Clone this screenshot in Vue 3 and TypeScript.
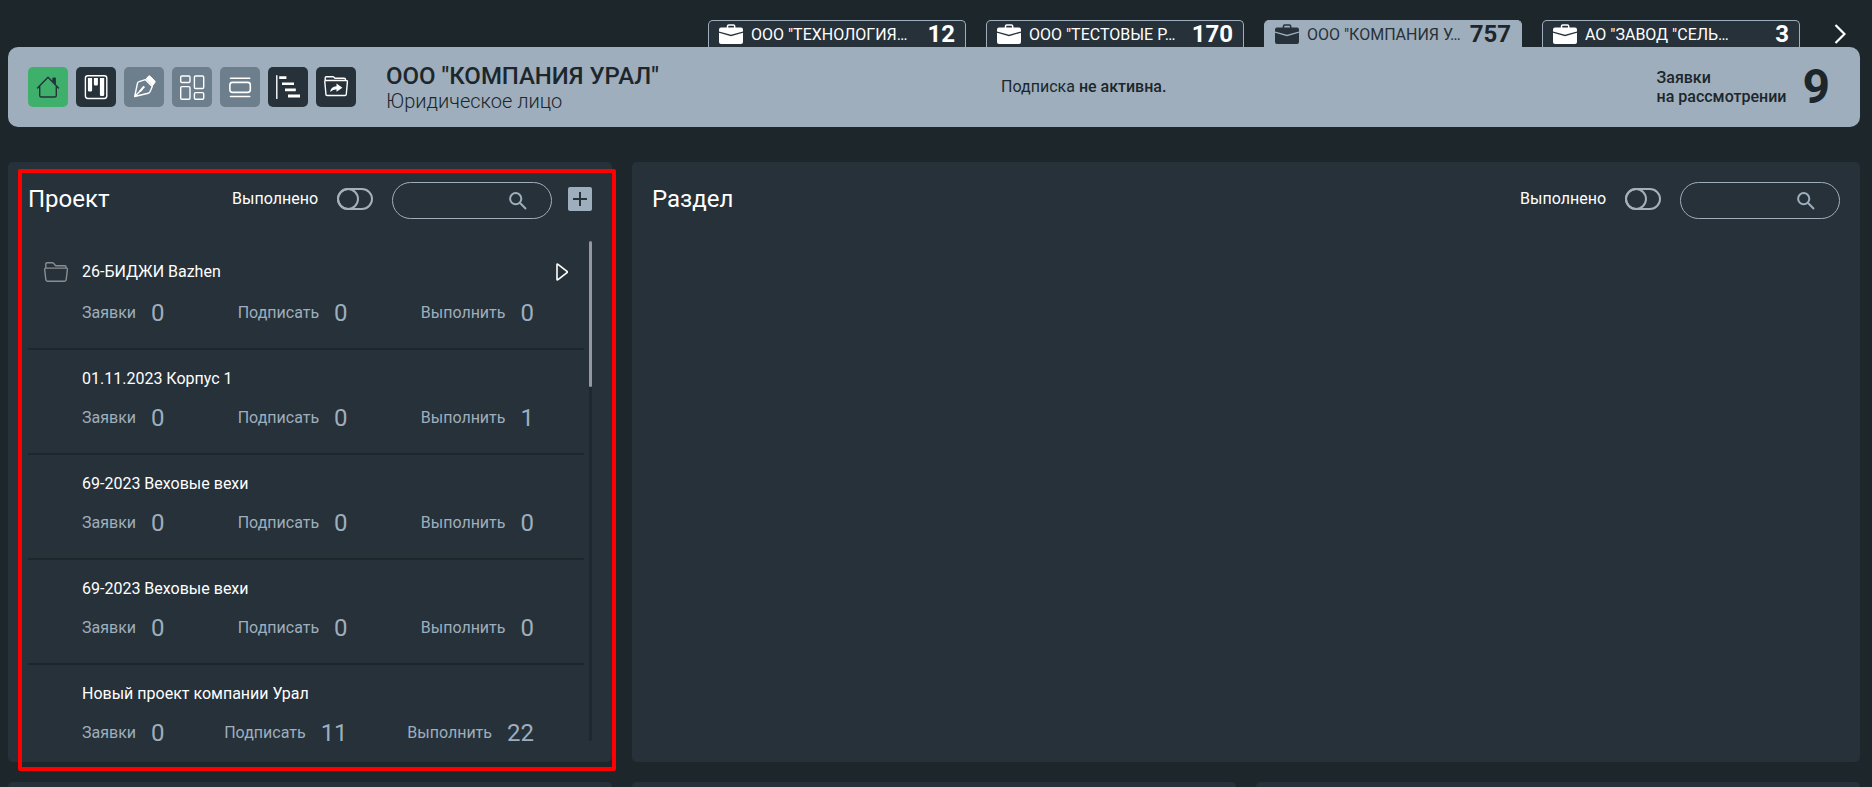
<script setup lang="ts">
import { ref } from 'vue'

interface CompanyTab { name: string; count: number; active?: boolean }
interface Tool { id: string; label: string; tone: 'home' | 'dark' | 'muted' }
interface Project { name: string; folder?: boolean; requests: number; sign: number; todo: number }

const tabs: CompanyTab[] = [
  { name: 'ООО "ТЕХНОЛОГИЯ…', count: 12 },
  { name: 'ООО "ТЕСТОВЫЕ Р…', count: 170 },
  { name: 'ООО "КОМПАНИЯ У…', count: 757, active: true },
  { name: 'АО "ЗАВОД "СЕЛЬ…', count: 3 },
]

const tools: Tool[] = [
  { id: 'home', label: 'Главная', tone: 'home' },
  { id: 'board', label: 'Доска', tone: 'dark' },
  { id: 'pen', label: 'Подпись', tone: 'muted' },
  { id: 'grid', label: 'Плитка', tone: 'muted' },
  { id: 'slides', label: 'Лента', tone: 'muted' },
  { id: 'gantt', label: 'График', tone: 'dark' },
  { id: 'share', label: 'Общие папки', tone: 'dark' },
]

const projects: Project[] = [
  { name: '26-БИДЖИ Bazhen', folder: true, requests: 0, sign: 0, todo: 0 },
  { name: '01.11.2023 Корпус 1', requests: 0, sign: 0, todo: 1 },
  { name: '69-2023 Веховые вехи', requests: 0, sign: 0, todo: 0 },
  { name: '69-2023 Веховые вехи', requests: 0, sign: 0, todo: 0 },
  { name: 'Новый проект компании Урал', requests: 0, sign: 11, todo: 22 },
]

const projectDone = ref(false)
const sectionDone = ref(false)
const projectQuery = ref('')
const sectionQuery = ref('')
</script>

<template>
  <div class="page">
    <nav class="tabs" aria-label="Компании">
      <button v-for="tab in tabs" :key="tab.name" type="button" class="tab" :class="{ active: tab.active }">
        <svg class="case" viewBox="0 0 24 20" aria-hidden="true">
          <path d="M8.5 4V2.3Q8.5 1 9.8 1h4.6q1.3 0 1.3 1.3V4" fill="none" stroke="currentColor" stroke-width="1.5" />
          <path d="M2 3.5h20q2 0 2 2V7.4L12 10.8 0 7.4V5.5q0-2 2-2z" fill="currentColor" />
          <path d="M0 8.7l12 3.5 12-3.5V18q0 2-2 2H2q-2 0-2-2z" fill="currentColor" />
        </svg>
        <span class="tab-name">{{ tab.name }}</span>
        <span class="tab-count">{{ tab.count }}</span>
      </button>
      <button type="button" class="next" aria-label="Следующие компании">
        <svg viewBox="0 0 12 20" aria-hidden="true"><path d="M1.5 1l9 9-9 9" fill="none" stroke="currentColor" stroke-width="2.2" /></svg>
      </button>
    </nav>

    <header class="banner">
      <div class="identity">
        <div class="tools">
          <button v-for="tool in tools" :key="tool.id" type="button" class="tool" :class="tool.tone" :aria-label="tool.label">
            <svg viewBox="0 0 40 40" fill="none" stroke="currentColor" stroke-width="1.4" stroke-linejoin="round" stroke-linecap="round" aria-hidden="true">
              <g v-if="tool.id === 'home'">
                <path d="M9.5 21L20 10.3 30.5 21M11.7 19.5v9q0 1.5 1.5 1.5h13.6q1.5 0 1.5-1.5v-9" />
                <path d="M25 14.5v-3.2h2.2v5.5" fill="currentColor" />
              </g>
              <g v-else-if="tool.id === 'board'">
                <rect x="9.4" y="8.7" width="21.4" height="22.8" rx="2.4" />
                <path d="M11.9 11h4.2v12.3q0 1.2-1.2 1.2h-1.8q-1.2 0-1.2-1.2zM17.9 11h4v6.3q0 1.2-1.2 1.2h-1.6q-1.2 0-1.2-1.2zM23.9 11h4.3v16.8q0 1.2-1.2 1.2h-1.9q-1.2 0-1.2-1.2z" fill="currentColor" stroke="none" />
              </g>
              <g v-else-if="tool.id === 'pen'">
                <path d="M10.7 29.5L13.5 16.2q.3-1.3 1.6-1.6L21.4 12.7l6.9 6.8-2.3 5.2q-.5 1.2-1.8 1.5zM10.9 29.3l6.6-6.6" />
                <path d="M15.8 23.6l3.1-3.9q1.4-1 1.4.6l-3.2 4z" fill="currentColor" stroke-width=".8" />
                <path d="M22 12l2.7-3q.7-.5 1.4.1l4.8 5q.6.7 0 1.4l-2.4 3.2z" fill="currentColor" stroke-width="1" />
              </g>
              <g v-else-if="tool.id === 'grid'">
                <rect x="8.7" y="9" width="9.3" height="6.5" rx="1.2" />
                <rect x="22.4" y="9" width="9.3" height="12.5" rx="1.2" />
                <rect x="8.7" y="19.6" width="9.3" height="12.6" rx="1.2" />
                <rect x="22.4" y="25.6" width="9.3" height="6.6" rx="1.2" />
              </g>
              <g v-else-if="tool.id === 'slides'" stroke-width="1.6">
                <path d="M10.5 11.3h19.2M10.5 29.5h19.2" />
                <rect x="9.9" y="15.4" width="20.4" height="10" rx="2.6" />
              </g>
              <g v-else-if="tool.id === 'gantt'">
                <path d="M8.8 8.7v22.7" />
                <path d="M11.2 9.2h7.2v2.7h-7.2zM14 15.4h12v2.7H14zM17 21.5h10.8v2.7H17zM20 27.6h12v2.9H20z" fill="currentColor" stroke="none" />
              </g>
              <g v-else>
                <path d="M10 28L8.8 14.8q-.1-1.3 1.1-1.3h20.2q1.4 0 1.3 1.4L30.3 27.2q-.1 1.3-1.4 1.3H11.2q-1.1 0-1.2-1M9.2 13.4v-2.5q0-1.2 1.2-1.2h6.4q.7 0 1.2.6l1 1h9.3q1.2 0 1.2 1.2v.9" />
                <path d="M14.2 25q.3-5.3 6.3-5.8v-2.7l5.9 4.3-5.9 3.9v-2.5q-3.7 0-6.3 2.8z" fill="currentColor" stroke="none" />
              </g>
            </svg>
          </button>
        </div>
        <div class="company">
          <h1>ООО "КОМПАНИЯ УРАЛ"</h1>
          <p class="kind">Юридическое лицо</p>
        </div>
      </div>
      <p class="subscription">Подписка <b>не активна.</b></p>
      <div class="review">
        <span>Заявки<br>на рассмотрении</span>
        <strong>9</strong>
      </div>
    </header>

    <main class="board">
      <section class="panel projects">
        <div class="panel-head">
          <h2>Проект</h2>
          <label class="done">Выполнено <input v-model="projectDone" type="checkbox" class="switch"></label>
          <div class="search">
            <input v-model="projectQuery" type="text" aria-label="Поиск проекта">
            <svg viewBox="0 0 18 18" aria-hidden="true"><circle cx="6.7" cy="6.7" r="5.6" /><path d="M10.8 10.8l6.2 6.2" /></svg>
          </div>
          <button type="button" class="add" aria-label="Добавить проект">
            <svg viewBox="0 0 24 24" aria-hidden="true"><path d="M12 5v14M5 12h14" stroke="currentColor" stroke-width="2" /></svg>
          </button>
        </div>
        <div class="scroll">
          <ul class="list">
            <li v-for="(project, i) in projects" :key="i" class="item">
              <div class="item-title">
                <svg v-if="project.folder" class="folder" viewBox="0 0 24 20" aria-hidden="true">
                  <path d="M1.8 6V2q0-1.3 1.3-1.3h5.1q.8 0 1.4.6l1.6 1.9q.5.6 1.3.6h8.3q1.3 0 1.3 1.3V6M1.8 6.1h20.6q1.1 0 1 1.2L22.2 17.7q-.2 1.5-1.7 1.5H3.5q-1.5 0-1.7-1.5L.7 7.3q-.1-1.2 1.1-1.2z" />
                </svg>
                <h3>{{ project.name }}</h3>
                <button v-if="project.folder" type="button" class="open" aria-label="Открыть проект">
                  <svg viewBox="0 0 12 18" aria-hidden="true"><path d="M1 1.5v15q.2.8 1 .2l9-7q.7-.7 0-1.4l-9-7Q1.2.7 1 1.5z" /></svg>
                </button>
              </div>
              <dl class="stats">
                <div><dt>Заявки</dt><dd>{{ project.requests }}</dd></div>
                <div><dt>Подписать</dt><dd>{{ project.sign }}</dd></div>
                <div><dt>Выполнить</dt><dd>{{ project.todo }}</dd></div>
              </dl>
            </li>
          </ul>
          <div class="track"><div class="thumb"></div></div>
        </div>
        <div class="highlight"></div>
      </section>

      <section class="panel sections">
        <div class="panel-head">
          <h2>Раздел</h2>
          <label class="done">Выполнено <input v-model="sectionDone" type="checkbox" class="switch"></label>
          <div class="search">
            <input v-model="sectionQuery" type="text" aria-label="Поиск раздела">
            <svg viewBox="0 0 18 18" aria-hidden="true"><circle cx="6.7" cy="6.7" r="5.6" /><path d="M10.8 10.8l6.2 6.2" /></svg>
          </div>
        </div>
      </section>

      <section class="panel"></section>
      <section class="panel"></section>
      <section class="panel"></section>
    </main>
  </div>
</template>

<style>
body {
  background: #1c262b;
}
</style>

<style scoped>
.page {
  box-sizing: border-box;
  height: 100vh;
  overflow: hidden;
  padding: 20px 12px 0 8px;
  background: #1c262b;
  color: #fff;
  font: 400 16px/20px Roboto, "Liberation Sans", sans-serif;
}
h1, h2, h3, p, ul, dl, dd {
  margin: 0;
  padding: 0;
}
button {
  padding: 0;
  border: 0;
  background: none;
  color: inherit;
  font: inherit;
  cursor: pointer;
}
svg {
  display: block;
}

.tabs {
  display: flex;
  justify-content: flex-end;
  gap: 20px;
  padding-right: 14px;
}
.tab {
  box-sizing: border-box;
  display: flex;
  align-items: center;
  width: 258px;
  height: 27px;
  padding: 0 10px;
  border: 1px solid #9eaebc;
  border-bottom: 0;
  border-radius: 5px 5px 0 0;
  background: #27313a;
}
.tab.active {
  background: #9eaebc;
  color: #27313a;
}
.case {
  width: 24px;
  height: 20px;
  margin-right: 8px;
}
.tab-name {
  flex: 1;
  overflow: hidden;
  padding-top: 2px;
  text-align: left;
  white-space: nowrap;
}
.tab-count {
  font-size: 24px;
  font-weight: 700;
}
.active .tab-count {
  color: #1c262b;
}
.next {
  margin-left: 14px;
}
.next svg {
  width: 12px;
  height: 20px;
}

.banner {
  box-sizing: border-box;
  display: grid;
  grid-template-columns: 54fr 12fr 34fr;
  align-items: center;
  height: 80px;
  padding: 0 30px 0 20px;
  border-radius: 10px;
  background: #9eaebc;
  color: #1c262b;
}
.identity {
  display: flex;
  align-items: center;
  gap: 30px;
}
.tools {
  display: flex;
  gap: 8px;
}
.tool {
  width: 40px;
  height: 40px;
  border-radius: 5px;
  color: #fff;
}
.tool.home {
  background: #3eb06c;
  color: #27313a;
}
.tool.dark {
  background: #27313a;
}
.tool.muted {
  background: #6d7e8c;
}
.company {
  padding-top: 2px;
}
h1 {
  font-size: 24px;
  font-weight: 500;
  line-height: 26px;
}
.kind {
  font-size: 20px;
  font-weight: 300;
  line-height: 24px;
}
.subscription {
  white-space: nowrap;
}
.subscription b {
  font-weight: 500;
}
.review {
  display: flex;
  align-items: center;
  justify-content: flex-end;
  gap: 16px;
  font-weight: 500;
  line-height: 19px;
}
.review strong {
  font-size: 48px;
  font-weight: 700;
  line-height: 56px;
}

.board {
  display: grid;
  grid-template-columns: repeat(3, 1fr);
  gap: 20px;
  margin-top: 35px;
}
.panel {
  position: relative;
  box-sizing: border-box;
  min-height: 200px;
  padding: 20px 20px 12px;
  border-radius: 5px;
  background: #27313a;
}
.sections {
  grid-column: span 2;
}
.panel-head {
  display: flex;
  align-items: center;
  height: 34px;
}
h2 {
  margin-right: auto;
  font-size: 24px;
  font-weight: 400;
  line-height: 28px;
}
.done {
  display: flex;
  align-items: center;
  gap: 19px;
  margin-right: 19px;
}
.switch {
  position: relative;
  appearance: none;
  box-sizing: border-box;
  width: 36px;
  height: 22px;
  margin: 0;
  border: 2px solid #a7afb7;
  border-radius: 11px;
}
.switch::before {
  content: "";
  position: absolute;
  top: -2px;
  left: -2px;
  box-sizing: border-box;
  width: 22px;
  height: 22px;
  border: 2px solid #a7afb7;
  border-radius: 50%;
}
.switch:checked::before {
  left: auto;
  right: -2px;
}
.search {
  box-sizing: border-box;
  display: flex;
  align-items: center;
  width: 160px;
  height: 37px;
  margin-top: 3px;
  padding: 0 24px 0 16px;
  border: 1px solid #9eaebc;
  border-radius: 19px;
}
.search input {
  flex: 1;
  min-width: 0;
  padding: 0;
  border: 0;
  outline: 0;
  background: none;
  color: inherit;
  font: inherit;
}
.search svg {
  width: 18px;
  height: 18px;
  fill: none;
  stroke: #9eaebc;
  stroke-width: 2;
}
.add {
  width: 24px;
  height: 24px;
  margin-left: 16px;
  border-radius: 2px;
  background: #9eaebc;
  color: #27313a;
}

.scroll {
  display: flex;
  gap: 5px;
  height: 509px;
  margin-top: 25px;
}
.list {
  flex: 1;
  overflow: hidden;
  list-style: none;
}
.item {
  padding: 19px 50px 21px 54px;
  border-bottom: 2px solid #1c262b;
}
.item-title {
  display: flex;
  align-items: center;
  min-height: 20px;
  margin: 0 -34px 0 -38px;
  padding-left: 38px;
}
.folder {
  width: 24px;
  height: 20px;
  margin: 2px 14px 2px -38px;
  fill: none;
  stroke: #8a8e90;
  stroke-width: 1.4;
}
h3 {
  font-size: 16px;
  font-weight: 400;
  line-height: 20px;
}
.open {
  margin-left: auto;
}
.open svg {
  width: 12px;
  height: 18px;
  fill: none;
  stroke: #fff;
  stroke-width: 1.6;
}
.stats {
  display: flex;
  justify-content: space-between;
  margin-top: 15px;
  color: #9eaebc;
}
.stats div {
  display: flex;
  align-items: center;
  gap: 15px;
}
.stats dd {
  font-size: 24px;
  line-height: 28px;
}
.track {
  width: 3px;
  height: 500px;
  border-radius: 2px;
  background: #1f282f;
}
.thumb {
  height: 146px;
  border-radius: 2px;
  background: #9498a2;
}
.highlight {
  position: absolute;
  inset: 7px -4px -9px 10px;
  border: 4px solid #f00;
  border-radius: 2px;
  pointer-events: none;
}
</style>
